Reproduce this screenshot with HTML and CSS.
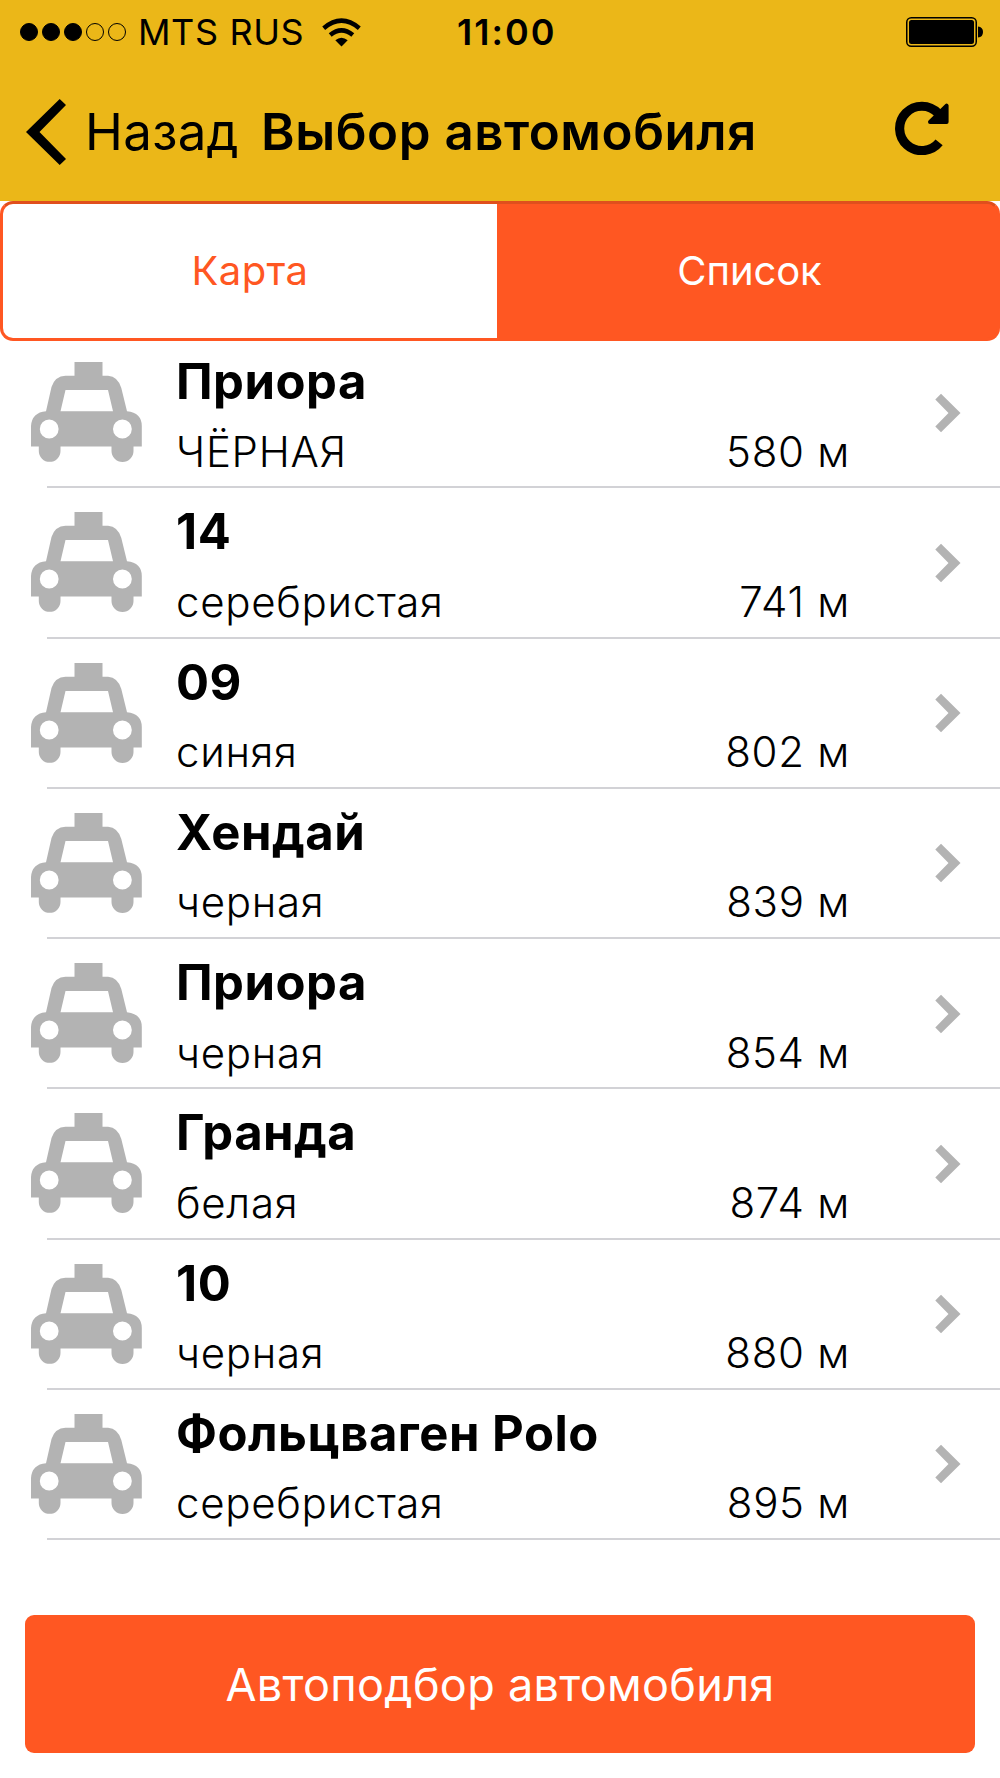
FILE: index.html
```html
<!DOCTYPE html>
<html lang="ru">
<head>
  <meta charset="UTF-8">
  <meta name="viewport" content="width=device-width, initial-scale=1.0">
  <title>Выбор автомобиля</title>
  <link rel="stylesheet" href="styles.css">
</head>
<body>
  <!-- shared icons -->
  <svg class="sprite" width="0" height="0">
    <symbol id="taxi" viewBox="0 0 111 100">
      <path fill-rule="evenodd" d="M43.5 0H71.5V13.7H77Q87 14.5 90.3 26L96 49.3Q110.8 51 110.8 64V84.5H102.5V89A10.8 10.8 0 0 1 80.5 89V84.5H29.5V89A10.8 10.8 0 0 1 7.8 89V84.5H0V64Q1 50.5 15 49.3L20.5 25Q24 14 34.5 13.7H43.5ZM34.5 28L29.5 49.3H82L77 28ZM18.2 57.6A9.4 9.4 0 1 0 18.2 76.4A9.4 9.4 0 1 0 18.2 57.6ZM91.4 57.6A9.4 9.4 0 1 0 91.4 76.4A9.4 9.4 0 1 0 91.4 57.6Z"/>
    </symbol>
    <symbol id="arrow" viewBox="0 0 26 40">
      <path d="M6 0.8L25.5 20L6 39.3L0.3 33.5L13.500 20L0.3 6.5Z"/>
    </symbol>
  </svg>

  <header class="header">
    <div class="status">
      <div class="signal">
        <span class="dot full"></span>
        <span class="dot full"></span>
        <span class="dot full"></span>
        <span class="dot"></span>
        <span class="dot"></span>
      </div>
      <span class="carrier">MTS RUS</span>
      <svg class="wifi" viewBox="0 0 39 29">
        <path d="M19.5 28.5L13.3 22.2Q19.5 17.2 25.7 22.2Z"/>
        <path class="wave" d="M8.2 17.1Q19.5 7.7 30.8 17.1M1.7 10.2Q19.5 -4.9 37.3 10.2"/>
      </svg>
      <span class="time">11:00</span>
      <svg class="battery" viewBox="0 0 78 30">
        <rect class="case" x="0.75" y="0.75" width="69.5" height="28.5" rx="4.5"/>
        <rect x="3" y="3" width="65" height="24" rx="2.5"/>
        <path d="M72 9.5Q77 10 77 15T72 20.5Z"/>
      </svg>
    </div>
    <nav class="navbar">
      <svg class="back-icon" viewBox="0 0 40 66">
        <path d="M33.7 0L40 6L13.5 33L40 60L33.7 66L0 33Z"/>
      </svg>
      <span class="back">Назад</span>
      <h1 class="title">Выбор автомобиля</h1>
      <svg class="refresh" viewBox="0 0 54 54">
        <path class="ring" d="M44.1 41.4A22.2 22.2 0 1 1 43 12.2"/>
        <path class="head" d="M51.6 4.6V21H35Z"/>
      </svg>
    </nav>
  </header>

  <div class="tabs">
    <div class="tab">Карта</div>
    <div class="tab active">Список</div>
  </div>

  <ul class="cars">
    <li class="car">
      <svg class="taxi"><use href="#taxi"/></svg>
      <div class="info">
        <h2 class="name">Приора</h2>
        <div class="details"><span>ЧЁРНАЯ</span><span>580 м</span></div>
      </div>
      <svg class="arrow"><use href="#arrow"/></svg>
    </li>
    <li class="car">
      <svg class="taxi"><use href="#taxi"/></svg>
      <div class="info">
        <h2 class="name">14</h2>
        <div class="details"><span>серебристая</span><span>741 м</span></div>
      </div>
      <svg class="arrow"><use href="#arrow"/></svg>
    </li>
    <li class="car">
      <svg class="taxi"><use href="#taxi"/></svg>
      <div class="info">
        <h2 class="name">09</h2>
        <div class="details"><span>синяя</span><span>802 м</span></div>
      </div>
      <svg class="arrow"><use href="#arrow"/></svg>
    </li>
    <li class="car">
      <svg class="taxi"><use href="#taxi"/></svg>
      <div class="info">
        <h2 class="name">Хендай</h2>
        <div class="details"><span>черная</span><span>839 м</span></div>
      </div>
      <svg class="arrow"><use href="#arrow"/></svg>
    </li>
    <li class="car">
      <svg class="taxi"><use href="#taxi"/></svg>
      <div class="info">
        <h2 class="name">Приора</h2>
        <div class="details"><span>черная</span><span>854 м</span></div>
      </div>
      <svg class="arrow"><use href="#arrow"/></svg>
    </li>
    <li class="car">
      <svg class="taxi"><use href="#taxi"/></svg>
      <div class="info">
        <h2 class="name">Гранда</h2>
        <div class="details"><span>белая</span><span>874 м</span></div>
      </div>
      <svg class="arrow"><use href="#arrow"/></svg>
    </li>
    <li class="car">
      <svg class="taxi"><use href="#taxi"/></svg>
      <div class="info">
        <h2 class="name">10</h2>
        <div class="details"><span>черная</span><span>880 м</span></div>
      </div>
      <svg class="arrow"><use href="#arrow"/></svg>
    </li>
    <li class="car">
      <svg class="taxi"><use href="#taxi"/></svg>
      <div class="info">
        <h2 class="name">Фольцваген Polo</h2>
        <div class="details"><span>серебристая</span><span>895 м</span></div>
      </div>
      <svg class="arrow"><use href="#arrow"/></svg>
    </li>
  </ul>

  <button class="auto">Автоподбор автомобиля</button>
</body>
</html>
```
FILE: styles.css
```css
* {
  box-sizing: border-box;
}

body {
  width: 1000px;
  height: 1778px;
  margin: 0;
  overflow: hidden;
  background: #fff;
  color: #000;
  font-family: Inter, "Noto Sans", sans-serif;
}

svg {
  flex-shrink: 0;
}

.sprite {
  display: block;
}

/* Status bar and navigation share one yellow block */
.header {
  height: 201px;
  background: #ebb718;
}

.status {
  display: flex;
  align-items: center;
  height: 64px;
  padding-left: 20px;
  padding-right: 16px;
  font-size: 36px;
}

.signal {
  display: flex;
  gap: 4px;
  width: 118px;
}

.dot {
  width: 18px;
  height: 18px;
  border: 1.5px solid #000;
  border-radius: 50%;
}

.dot.full {
  background: #000;
}

.carrier {
  width: 184px;
  letter-spacing: 0.6px;
}

.wifi {
  width: 39px;
  height: 29px;
}

.wave {
  fill: none;
  stroke: #000;
  stroke-width: 4.5;
}

.time {
  margin-left: 96px;
  font-weight: 600;
  letter-spacing: 2px;
}

.battery {
  width: 78px;
  height: 30px;
  margin-left: auto;
}

.case {
  fill: none;
  stroke: #000;
  stroke-width: 1.5;
}

.navbar {
  display: flex;
  align-items: center;
  height: 135px;
  padding-left: 26px;
  padding-right: 51px;
  font-size: 51px;
}

.back-icon {
  width: 40px;
  height: 66px;
}

.back {
  width: 195px;
  padding-left: 19px;
  letter-spacing: 0.3px;
}

.title {
  margin: 0;
  font-size: 51px;
  font-weight: 600;
  letter-spacing: 0.55px;
  white-space: nowrap;
}

.refresh {
  width: 54px;
  height: 54px;
  margin-left: auto;
  margin-bottom: 7px;
}

.ring {
  fill: none;
  stroke: #000;
  stroke-width: 9.2;
}

.head {
  stroke: #000;
  stroke-width: 4;
  stroke-linejoin: round;
}

/* Map / list switch */
.tabs {
  display: flex;
  height: 140px;
  border: 3px solid #ff5722;
  border-top-color: #e04f1d;
  border-radius: 13px;
  background: #ff5722;
  font-size: 40px;
}

.tab {
  display: flex;
  align-items: center;
  justify-content: center;
  width: 494px;
  padding-bottom: 2px;
  border-radius: 10px 0 0 10px;
  background: #fff;
  color: #ff5722;
  letter-spacing: 0.4px;
}

.tab.active {
  flex: 1;
  padding-left: 5px;
  border-radius: 0 10px 10px 0;
  background: #ff5722;
  color: #fff;
  letter-spacing: -0.1px;
}

.cars {
  margin: -3px 0 0;
  padding: 0;
  list-style: none;
}

.car {
  display: flex;
  align-items: flex-start;
  height: 150.28px;
  padding-left: 31px;
  /* divider starts at the inset, not at the screen edge */
  background: linear-gradient(#d2d2d6, #d2d2d6) 47px 100% / 953px 2px no-repeat;
}

.taxi {
  width: 111px;
  height: 100px;
  margin-top: 24px;
  fill: #b3b3b3;
}

.info {
  width: 674px;
  margin-left: 34px;
  padding-top: 12px;
}

.name {
  margin: 0 0 5.5px;
  font-size: 49px;
  font-weight: 700;
  line-height: 64px;
  letter-spacing: 0.5px;
}

.details {
  display: flex;
  justify-content: space-between;
  font-size: 42px;
  font-weight: 300;
  line-height: 64px;
  letter-spacing: 0.7px;
}

.arrow {
  width: 26px;
  height: 40px;
  margin: 54.5px 0 0 85px;
  fill: #b3b3b3;
}

.auto {
  display: block;
  width: 950px;
  height: 138px;
  margin: 75px auto 0;
  padding: 0;
  border: 0;
  border-radius: 9px;
  background: #ff5722;
  color: #fff;
  font-family: inherit;
  font-size: 45px;
  letter-spacing: 0.3px;
}
```
